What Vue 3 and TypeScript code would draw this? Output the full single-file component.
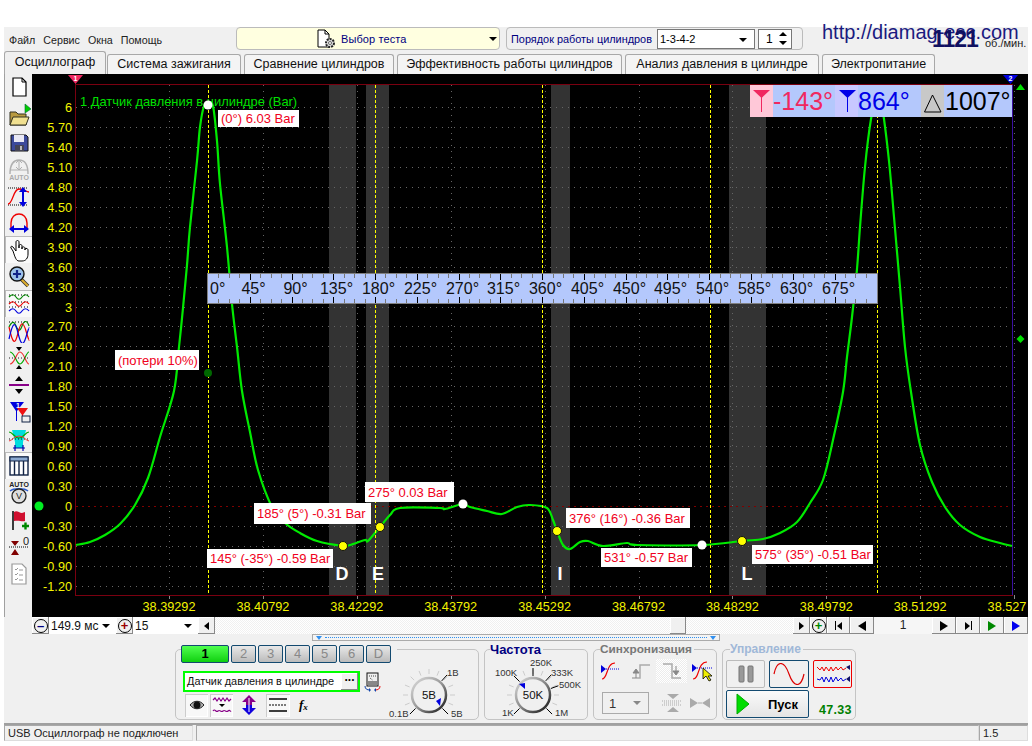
<script setup lang="ts">
const tabs = [
  { t: 'Осциллограф', w: 102 },
  { t: 'Система зажигания', w: 134 },
  { t: 'Сравнение цилиндров', w: 150 },
  { t: 'Эффективность работы цилиндров', w: 225 },
  { t: 'Анализ давления в цилиндре', w: 194 },
  { t: 'Электропитание', w: 113 }
]
const yVals = ['6','5.70','5.40','5.10','4.80','4.50','4.20','3.90','3.60','3.30','3','2.70','2.40','2.10','1.80','1.50','1.20','0.90','0.60','0.30','0','-0.30','-0.60','-0.90','-1.20']
const yTicks = yVals.map((l) => ({ l, y: Math.round(506 - 66.5 * parseFloat(l)) + 0.5 }))
const xVals = ['38.39292','38.40792','38.42292','38.43792','38.45292','38.46792','38.48292','38.49792','38.51292','38.527']
const xTicks = xVals.map((l, i) => ({ l, x: Math.round(169 + 93.9 * i) + 0.5, lx: i === 9 ? 1007 : 169 + 93.9 * i }))
const bands = [[329, 27], [366, 23], [551, 19], [729, 37]]
const cursors = [208.5, 375.5, 542.5, 710.5, 877.5]
const letters = [['D', 342], ['E', 378], ['I', 560], ['L', 747]] as [string, number][]
const deg = Array.from({ length: 16 }, (_, i) => ({ l: i * 45 + '°', x: Math.round(208 + i * 41.77) + 0.5 }))
const minor = Array.from({ length: 64 }, (_, i) => Math.round(208 + i * 10.44) + 0.5).filter((_, i) => i % 4 !== 0)
const labels = [
  { t: '(0°) 6.03 Bar', x: 218, y: 110, w: 81, h: 17 },
  { t: '(потери 10%)', x: 115, y: 350, w: 84, h: 20 },
  { t: '145° (-35°) -0.59 Bar', x: 207, y: 549, w: 126, h: 19 },
  { t: '185° (5°) -0.31 Bar', x: 254, y: 503, w: 117, h: 21 },
  { t: '275° 0.03 Bar', x: 365, y: 482, w: 89, h: 20 },
  { t: '376° (16°) -0.36 Bar', x: 566, y: 508, w: 124, h: 20 },
  { t: '531° -0.57 Bar', x: 601, y: 548, w: 91, h: 19 },
  { t: '575° (35°) -0.51 Bar', x: 752, y: 545, w: 121, h: 19 }
]
const pts: [number, number][] = [
  [76,545],[90,542],[105,535],[120,524],[135,505],[148,478],[160,437],[174,391],[179,347],[183,308],[187,265],[190,227],[197,161],[200,127],[204,106],[208,103],[213,106],[217,141],[220,184],[227,247],[232,304],[237,347],[242,391],[250,432],[258,470],[272,507],[285,523],[300,533],[317,541],[343,546],[350,545],[365,540],[368,541],[380,527],[390,515],[400,508],[440,508],[445,509],[463,504],[470,507],[487,511],[502,514],[517,507],[530,505],[547,508],[553,520],[557,531],[563,545],[570,549],[580,542],[588,541],[603,546],[627,543],[637,545],[702,545],[742,541],[763,539],[780,533],[797,522],[810,503],[823,480],[833,440],[843,392],[847,357],[852,317],[857,269],[860,227],[865,167],[871,119],[875,104],[878,96],[881,104],[884,119],[889,161],[894,217],[900,287],[905,347],[911,392],[920,445],[932,482],[945,507],[960,525],[980,537],[1000,543],[1012,546]
]
function smooth(p: [number, number][]): string {
  let d = `M${p[0][0]} ${p[0][1]}`
  for (let i = 0; i < p.length - 1; i++) {
    const a = p[Math.max(0, i - 1)], b = p[i], c = p[i + 1], e = p[Math.min(p.length - 1, i + 2)]
    const k = 1 / 6
    d += `C${(b[0] + (c[0] - a[0]) * k).toFixed(1)} ${(b[1] + (c[1] - a[1]) * k).toFixed(1)} ${(c[0] - (e[0] - b[0]) * k).toFixed(1)} ${(c[1] - (e[1] - b[1]) * k).toFixed(1)} ${c[0]} ${c[1]}`
  }
  return d
}
const curve = smooth(pts)
const channels = ['2', '3', '4', '5', '6', 'D']
function spokes(cx: number, cy: number, r1: number, r2: number, angles: number[]) {
  return angles.map((deg) => {
    const a = (deg * Math.PI) / 180
    return { x1: cx + r1 * Math.cos(a), y1: cy + r1 * Math.sin(a), x2: cx + r2 * Math.cos(a), y2: cy + r2 * Math.sin(a) }
  })
}
const ring = Array.from({ length: 13 }, (_, i) => 135 + (270 * i) / 12)
const voltSpokes = spokes(429, 695, 21, 26, ring)
const freqSpokes = spokes(533, 695, 21, 26, ring)
const voltMain = spokes(429, 695, 19, 27, [135, 312, 45])
const freqMain = spokes(533, 695, 19, 27, [135, 225, 270, 312, 340, 45])
</script>

<template>
  <div class="page">
    <div class="win">
      <div class="top">
        <nav class="menu"><span>Файл</span><span>Сервис</span><span>Окна</span><span>Помощь</span></nav>
        <div class="test">
          <svg class="testicon" width="22" height="20" viewBox="0 0 22 20">
            <path d="M2 1h7l4 4v13H2z" fill="#fff" stroke="#000" />
            <path d="M9 1v4h4" fill="none" stroke="#000" />
            <circle cx="14" cy="14" r="4" fill="#ddd" stroke="#222" stroke-width="2" stroke-dasharray="2 1" />
            <circle cx="14" cy="14" r="1.5" fill="#fff" stroke="#333" stroke-width=".7" />
          </svg>
          <span class="testtext">Выбор теста</span>
          <i class="caret testcaret"></i>
        </div>
        <div class="order">
          <span class="ordertext">Порядок работы цилиндров</span>
          <div class="sel selorder">1-3-4-2<i class="caret"></i></div>
          <div class="sel spin">1<span class="spinarrows"><i class="up"></i><i class="down"></i></span></div>
        </div>
      </div>
      <div class="url">http://diamag-esc.com</div>
      <div class="rpm">1121</div>
      <div class="rpmunit">об./мин.</div>

      <div class="tabs">
        <div v-for="(t, i) in tabs" :key="t.t" class="tab" :class="{ active: i === 0 }" :style="{ width: t.w + 'px' }">{{ t.t }}</div>
      </div>

      <div class="main">
        <div class="tools">
          <div class="tool"><svg width="24" height="24" viewBox="0 0 24 24"><path d="M6 5h9l4 4v14H6z" transform="translate(0 -3)" fill="#fff" stroke="#000" stroke-width="1.2"/><path d="M15 2v4h4" fill="none" stroke="#000"/></svg></div>
          <div class="tool"><svg width="24" height="24" viewBox="0 0 24 24"><path d="M20 1v9l6-4z" transform="translate(-2 0)" fill="#0c0" stroke="#063" stroke-width=".6"/><path d="M3 9h6l2 2h8v11H3z" fill="#b89a40" stroke="#332" /><path d="M3 22l3-8h16l-3 8z" fill="#f0e090" stroke="#332"/></svg></div>
          <div class="tool"><svg width="24" height="24" viewBox="0 0 24 24"><path d="M4 5h15l2 2v14H4z" fill="#3c4a9c" stroke="#111"/><rect x="7" y="5" width="10" height="7" fill="#e8e8f4"/><rect x="8" y="15" width="9" height="6" fill="#445" /><rect x="13" y="16" width="2" height="4" fill="#bbb"/></svg></div>
          <div class="tool"><svg width="26" height="24" viewBox="0 0 26 24"><path d="M4 17C4 7 8 3 13 3s9 4 9 14" fill="none" stroke="#b0b0b0" stroke-width="1.4"/><path d="M13 3v10M10 6l3-3 3 3M10 10l3 3 3-3M4 13h18" fill="none" stroke="#b0b0b0"/><text x="13" y="23" text-anchor="middle" class="auto gray">AUTO</text></svg></div>
          <div class="tool"><svg width="26" height="24" viewBox="0 0 26 24"><path d="M2 4h20M2 21h20" stroke="#000" stroke-dasharray="1 1"/><path d="M2 20c5 0 5-15 11-15 5 0 7 3 10 3" fill="none" stroke="#e00" stroke-width="1.3"/><path d="M17 7v12" stroke="#00d" stroke-width="2"/><path d="M13 8l4-5 4 5zM13 18l4 5 4-5z" fill="#00d"/></svg></div>
          <div class="tool"><svg width="26" height="24" viewBox="0 0 26 24"><path d="M5 18V12C5 6 9 3 13 3s8 3 8 9v6" fill="none" stroke="#e00" stroke-width="1.4"/><path d="M4 18h18" stroke="#00d" stroke-width="2"/><path d="M8 14l-5 4 5 4zM18 14l5 4-5 4z" fill="#00d"/></svg></div>
          <div class="tool pressed"><svg width="24" height="24" viewBox="0 0 24 24"><path d="M6 13l-2-3c-1-2 1-2 2-1l3 4V4c0-2 3-2 3 0v6-2c0-2 3-2 3 0v3-1c0-2 3-1 3 0v2-1c0-1 3-1 3 1v4c0 4-2 7-6 7h-3c-3 0-4-4-6-10z" fill="#fff" stroke="#000"/></svg></div>
          <div class="tool"><svg width="24" height="24" viewBox="0 0 24 24"><path d="M14 14l7 7" stroke="#333" stroke-width="3.5"/><path d="M14 14l7 7" stroke="#e0b030" stroke-width="2"/><circle cx="10" cy="9" r="7" fill="#9cc0e8" stroke="#111" stroke-width="1.4"/><path d="M6 9h8M10 5v8" stroke="#128" stroke-width="2.2"/></svg></div>
          <div class="tool pressed"><svg width="24" height="24" viewBox="0 0 24 24"><path d="M2 3h20M2 15h20M2 10h20" stroke="#000" stroke-dasharray="1 2"/><path d="M2 5c3-3 5-3 7 0s4 3 6 0 5-3 7 0" fill="none" stroke="#080" stroke-width="1.2"/><path d="M2 12c3-3 5-3 7 0s4 3 6 0 5-3 7 0" fill="none" stroke="#e00" stroke-width="1.2"/><path d="M2 19c3-3 5-3 7 0s4 3 6 0 5-3 7 0" fill="none" stroke="#00d" stroke-width="1.2"/></svg></div>
          <div class="tool"><svg width="24" height="24" viewBox="0 0 24 24"><path d="M2 3h20" stroke="#000" stroke-dasharray="1 2"/><path d="M2 8c3-6 5-6 7-1s4 6 6 0 5-6 7 0" fill="none" stroke="#080" stroke-width="1.2"/><path d="M2 8c4 18 6 18 9 6s5-12 8-2 3 9 3 9" fill="none" stroke="#e00" stroke-width="1.2"/><path d="M2 20c4-18 6-18 9-6s5 14 8 4 3-9 3-9" fill="none" stroke="#00d" stroke-width="1.2"/></svg></div>
          <div class="tool"><svg width="24" height="24" viewBox="0 0 24 24"><path d="M3 6c5 0 6 12 10 12s6-12 9-12" fill="none" stroke="#0a0" stroke-width="1.2"/><path d="M3 18c5 0 6-12 10-12s6 12 9 12" fill="none" stroke="#e33" stroke-width="1.2"/><path d="M2 12h20" stroke="#222" stroke-dasharray="1 2"/><path d="M9 1h6l-3 4zM9 23h6l-3-4z" fill="#000"/></svg></div>
          <div class="tool"><svg width="24" height="24" viewBox="0 0 24 24"><path d="M2 12h20" stroke="#808" stroke-width="2"/><path d="M8 8h8l-4-5zM8 16h8l-4 5z" fill="#000"/></svg></div>
          <div class="tool"><svg width="24" height="24" viewBox="0 0 24 24"><path d="M3 2h14l-7 9v10H9V11z" fill="#00d"/><path d="M10 8h11l-5 7v7h-1v-7z" fill="#e11"/><text x="9" y="8" class="tiny">1</text><rect x="15" y="16" width="8" height="6" fill="#eee" stroke="#124" /></svg></div>
          <div class="tool"><svg width="24" height="24" viewBox="0 0 24 24"><path d="M5 3h14l-3 12v6H8v-6z" fill="#0dd"/><path d="M2 5c4 0 5 6 10 6s6-6 10-6" fill="none" stroke="#0a0" stroke-width="1.2"/><path d="M2 12h20" stroke="#111" stroke-dasharray="1 2"/><path d="M2 14c4-1 5-5 10-5s6 4 10 5" fill="none" stroke="#e33"/><path d="M6 21h12M8 18v6M16 18v6" stroke="#00a" stroke-width="1.2"/></svg></div>
          <div class="tool pressed"><svg width="24" height="24" viewBox="0 0 24 24"><rect x="3" y="3" width="18" height="18" fill="#fff" stroke="#124" stroke-width="1.4"/><rect x="3" y="3" width="18" height="4" fill="#8aa8d0" stroke="#124"/><path d="M7.500 7v14M12 7v14M16.500 7v14" stroke="#124" stroke-width="1.4"/></svg></div>
          <div class="tool"><svg width="24" height="24" viewBox="0 0 24 24"><text x="12" y="6" text-anchor="middle" class="auto dark">AUTO</text><path d="M3 10c3-3 15-3 18 0" fill="none" stroke="#3060d0" stroke-width="1.5"/><circle cx="12" cy="15" r="7" fill="#ddd" stroke="#222" stroke-width="1.3"/><text x="12" y="18" text-anchor="middle" class="tinyv">V</text></svg></div>
          <div class="tool"><svg width="24" height="24" viewBox="0 0 24 24"><path d="M6 3v19" stroke="#000" stroke-width="1.5"/><path d="M7 4c3-2 5 1 8 1l3-1v9c-3 1-6-1-11 0z" fill="#d01030"/><path d="M15 18h7M18.500 14.500v7" stroke="#080" stroke-width="2.4"/></svg></div>
          <div class="tool"><svg width="24" height="24" viewBox="0 0 24 24"><text x="19" y="10" text-anchor="middle" class="zero">0</text><path d="M2 12h20" stroke="#000" stroke-dasharray="1 1"/><path d="M4 6h8l-4 5zM4 20h8l-4-6z" fill="#800000"/></svg></div>
          <div class="tool"><svg width="24" height="24" viewBox="0 0 24 24"><path d="M5 2h10l4 4v16H5z" fill="#fff" stroke="#999" stroke-width="1.2"/><path d="M8 7l1 1 2-2M8 12l1 1 2-2M8 17l1 1 2-2M12 8h4M12 13h4M12 18h4" fill="none" stroke="#999"/></svg></div>
        </div>

        <svg class="chart" width="996" height="543" viewBox="32 74 996 543">
          <rect x="32" y="74" width="996" height="543" fill="#000" />
          <rect v-for="b in bands" :key="b[0]" :x="b[0]" y="85" :width="b[1]" height="510" fill="#333" />
          <line v-for="t in yTicks" :key="t.l" x1="76" x2="1012" :y1="t.y" :y2="t.y" :class="t.l === '0' ? 'zero-line' : 'grid'" />
          <line v-for="t in xTicks" :key="t.l" :x1="t.x" :x2="t.x" y1="85" y2="595" class="grid" />
          <line v-for="t in xTicks" :key="'k' + t.l" :x1="t.x" :x2="t.x" y1="595" y2="599" stroke="#888" />
          <rect x="75.500" y="84.500" width="937" height="511" fill="none" stroke="#7a0010" />
          <line x1="1012.500" x2="1012.500" y1="85" y2="595" stroke="#3a10a0" />
          <path :d="curve" fill="none" stroke="#00ea00" stroke-width="2.200" />
          <line v-for="c in cursors" :key="c" :x1="c" :x2="c" y1="85" y2="595" class="cursor" />

          <text v-for="t in yTicks" :key="'y' + t.l" x="72" :y="t.y + 4.500" text-anchor="end" class="axis">{{ t.l }}</text>
          <text v-for="t in xTicks" :key="'x' + t.l" :x="t.lx" y="611" text-anchor="middle" class="axis">{{ t.l }}</text>

          <text x="80" y="106" class="trace">1 Датчик давления в цилиндре (Bar)</text>
          <text v-for="l in letters" :key="l[0]" :x="l[1]" y="580" text-anchor="middle" class="letter">{{ l[0] }}</text>

          <rect x="207.500" y="273.500" width="670" height="30" fill="#b4c8fc" stroke="#808080" />
          <g v-for="x in minor" :key="x">
            <line :x1="x" :x2="x" y1="274" y2="278" stroke="#777" />
            <line :x1="x" :x2="x" y1="299" y2="303" stroke="#777" />
          </g>
          <g v-for="(d, i) in deg" :key="d.l">
            <template v-if="i > 0">
              <line :x1="d.x" :x2="d.x" y1="274" y2="280" stroke="#000" />
              <line :x1="d.x" :x2="d.x" y1="297" y2="303" stroke="#000" />
            </template>
            <text :x="i === 0 ? 210 : d.x + 3" y="294" :text-anchor="i === 0 ? 'start' : 'middle'" class="deg">{{ d.l }}</text>
          </g>

          <g v-for="l in labels" :key="l.t">
            <rect :x="l.x" :y="l.y" :width="l.w" :height="l.h" fill="#fff" />
            <text :x="l.x + 3" :y="l.y + l.h / 2 + 4.500" class="lbl">{{ l.t }}</text>
          </g>

          <circle cx="208" cy="105" r="4.500" fill="#fff" />
          <circle cx="463" cy="504" r="4.500" fill="#fff" />
          <circle cx="702" cy="545" r="4.500" fill="#fff" />
          <circle cx="208" cy="373" r="4" fill="#006800" />
          <circle v-for="p in [[343, 546], [380, 527], [557, 531], [742, 541]]" :key="p[0]" :cx="p[0]" :cy="p[1]" r="4.500" fill="#ff0" stroke="#111" />

          <circle cx="39" cy="506" r="4.500" fill="#0e2" />
          <path d="M68 75h15l-7.500 9z" fill="#f02860" />
          <text x="75.500" y="81" text-anchor="middle" class="mark">1</text>
          <path d="M1003 75h15l-7.500 9z" fill="#0000e0" />
          <text x="1010.500" y="81" text-anchor="middle" class="mark">2</text>
          <path d="M1016 90h9l-4.500-6z" fill="#00e000" />
          <path d="M1020.500 335l4 4-4 4-4-4z" fill="#00e000" />

          <rect x="750" y="85" width="262" height="32" fill="#b4c8fc" />
          <rect x="750" y="85" width="23" height="32" fill="#ffc8d8" />
          <rect x="835" y="85" width="23" height="32" fill="#c8c8ff" />
          <rect x="921" y="85" width="23" height="32" fill="#c8c8c8" />
          <path d="M753 90h17l-8.500 8z" fill="#f02860" />
          <line x1="761.500" x2="761.500" y1="96" y2="112" stroke="#f02860" />
          <path d="M839 90h17l-8.500 8z" fill="#0000e8" />
          <line x1="847.500" x2="847.500" y1="96" y2="112" stroke="#0000e8" />
          <path d="M924.500 112l8-17 8.500 17z" fill="none" stroke="#000" />
          <text x="773" y="110" class="info" fill="#f02860">-143°</text>
          <text x="858" y="110" class="info" fill="#0000e8">864°</text>
          <text x="945" y="110" class="info" fill="#000">1007°</text>
        </svg>
      </div>

      <div class="bar">
        <button class="btn round"><span class="circ">–</span></button>
        <div class="barsel w68">149.9 мс<i class="caret"></i></div>
        <button class="btn round"><span class="circ plusred">+</span></button>
        <div class="barsel w64">15<i class="caret"></i></div>
        <button class="btn w17"><i class="tri left"></i></button>
        <div class="track"><div class="thumb"></div></div>
        <button class="btn w17"><i class="tri right"></i></button>
        <button class="btn round"><span class="circ plusgreen">+</span></button>
        <button class="btn w23"><i class="stop l"></i><i class="tri left"></i></button>
        <button class="btn w24"><i class="tri left big"></i></button>
        <div class="page-no">1</div>
        <button class="btn w24"><i class="tri right big"></i></button>
        <button class="btn w24"><i class="tri right"></i><i class="stop"></i></button>
        <button class="btn w24"><i class="tri right big green"></i></button>
        <button class="btn w24"><i class="tri right big blue"></i></button>
      </div>
      <div class="slider"><div class="sliderbox"><i class="mini"></i><span class="dots"></span><i class="mini"></i></div></div>

      <div class="panel">
        <section class="group g1">
          <div class="chantabs">
            <div class="chan on">1</div>
            <div v-for="c in channels" :key="c" class="chan">{{ c }}</div>
          </div>
          <div class="g1left">
            <div class="inputrow">
              <div class="input">Датчик давления в цилиндре<button class="btn dots3">...</button></div>
              <svg width="20" height="20" viewBox="0 0 20 20"><rect x="4" y="1" width="11" height="13" fill="#eee" stroke="#111"/><rect x="5" y="9" width="9" height="4" fill="#888"/><path d="M7 6l2.500 2M6 4h7" stroke="#444" stroke-dasharray="1 1"/><path d="M2 14c0 3 2 4 5 4" fill="none" stroke="#14a"/><path d="M17 14c0 3-2 4-5 4" fill="none" stroke="#e11"/><path d="M6 16l2 2-2 2zM13 16l-2 2 2 2z" fill="#14a"/></svg>
            </div>
            <div class="iconrow">
              <button class="flat on w23b"><svg width="18" height="14" viewBox="0 0 18 14"><path d="M2 7c4-5 10-5 14 0-4 5-10 5-14 0z" fill="#aaa" stroke="#222"/><circle cx="9" cy="7" r="3.500" fill="#111"/></svg></button>
              <button class="flat on w23b"><svg width="20" height="20" viewBox="0 0 20 20"><path d="M1 5l2-2 2 3 2-3 2 3 2-3 2 3 2-3 2 3 2-2" fill="none" stroke="#808" stroke-width="1.200"/><path d="M7 9h6l-3 3z" fill="#000"/><path d="M1 16c2-3 3 2 5 0s3 2 5 0 3 2 5 0 2 1 3 0" fill="none" stroke="#808" stroke-width="1.200"/></svg></button>
              <span class="plain w20"><svg width="16" height="20" viewBox="0 0 16 20"><path d="M8 0l7 7h-4v3H5V7H1z" fill="#808"/><path d="M5 10h6v3h4l-7 7-7-7h4z" fill="#10d"/><path d="M8 3v14" stroke="#fff"/></svg></span>
              <button class="flat on w23c"><svg width="20" height="16" viewBox="0 0 20 16"><path d="M1 2h18M1 14h18" stroke="#000" stroke-width="1.300"/><path d="M1 8h18" stroke="#000" stroke-dasharray="2 1"/></svg></button>
              <span class="fx">f<sub>x</sub></span>
            </div>
          </div>
          <svg class="knob" width="92" height="64" viewBox="384 660 92 64">
            <line v-for="(s, i) in voltSpokes" :key="i" :x1="s.x1" :y1="s.y1" :x2="s.x2" :y2="s.y2" stroke="#ccc" />
            <line v-for="(s, i) in voltMain" :key="'m' + i" :x1="s.x1" :y1="s.y1" :x2="s.x2" :y2="s.y2" stroke="#000" />
            <circle cx="429" cy="695" r="17" fill="#f0f0f0" stroke="url(#ring)" stroke-width="2.500" />
            <path d="M436 701l5-3-1 8z" fill="#00d" />
            <text x="429" y="699" text-anchor="middle" class="kv">5В</text>
            <text x="447" y="676" class="kl">1В</text>
            <text x="389" y="717" class="kl">0.1В</text>
            <text x="451" y="717" class="kl">5В</text>
            <defs>
              <linearGradient id="ring" x1="0" y1="0" x2="1" y2="1"><stop offset="0" stop-color="#ddd"/><stop offset=".5" stop-color="#999"/><stop offset="1" stop-color="#111"/></linearGradient>
            </defs>
          </svg>
        </section>

        <section class="group g2">
          <span class="legend navy">Частота</span>
          <svg width="103" height="71" viewBox="484 649 103 71">
            <line v-for="(s, i) in freqSpokes" :key="i" :x1="s.x1" :y1="s.y1" :x2="s.x2" :y2="s.y2" stroke="#ccc" />
            <line v-for="(s, i) in freqMain" :key="'m' + i" :x1="s.x1" :y1="s.y1" :x2="s.x2" :y2="s.y2" stroke="#000" />
            <circle cx="533" cy="695" r="17" fill="#f0f0f0" stroke="url(#ring2)" stroke-width="2.500" />
            <path d="M519 684l6-1 0 6z" fill="#00d" />
            <text x="533" y="699" text-anchor="middle" class="kv">50K</text>
            <text x="495" y="676" class="kl">100K</text>
            <text x="530" y="666" class="kl">250K</text>
            <text x="551" y="676" class="kl">333K</text>
            <text x="559" y="688" class="kl">500K</text>
            <text x="502" y="716" class="kl">1K</text>
            <text x="555" y="716" class="kl">1M</text>
            <defs>
              <linearGradient id="ring2" x1="0" y1="0" x2="1" y2="1"><stop offset="0" stop-color="#ddd"/><stop offset=".5" stop-color="#888"/><stop offset="1" stop-color="#111"/></linearGradient>
            </defs>
          </svg>
        </section>

        <section class="group g3">
          <span class="legend grayt">Синхронизация</span>
          <div class="syncrow">
            <span class="syncicon"><svg width="22" height="22" viewBox="0 0 22 22"><path d="M3 19c6 0 4-16 13-16" fill="none" stroke="#e00" stroke-width="1.200"/><path d="M7 9h13" stroke="#00d" stroke-dasharray="1 1"/><path d="M2 5l5 4-5 4z" fill="#00d"/></svg></span>
            <span class="syncicon"><svg width="22" height="22" viewBox="0 0 22 22"><path d="M2 18h8V5h10" fill="none" stroke="#aaa" stroke-width="1.500"/><path d="M6 9l-3 4h6zM6 13v5" fill="#888" stroke="#888"/></svg></span>
            <span class="syncicon hatched"><svg width="22" height="22" viewBox="0 0 22 22"><path d="M2 4h9v14h9" fill="none" stroke="#aaa" stroke-width="1.500"/><path d="M15 6v5M12 11h6l-3 4z" fill="#888" stroke="#888"/></svg></span>
            <span class="syncicon"><svg width="24" height="24" viewBox="0 0 24 24"><path d="M2 20c7 0 4-17 14-17" fill="none" stroke="#e00" stroke-width="1.200"/><path d="M6 9h15" stroke="#00d" stroke-dasharray="1 1"/><path d="M1 5l5 4-5 4z" fill="#00d"/><path d="M12 9v11l3-3 3 5 2-1-3-4h4z" fill="#ee0" stroke="#000" stroke-width=".8"/></svg></span>
          </div>
          <div class="syncrow2">
            <div class="syncsel">1<i class="caret graycaret"></i></div>
            <svg class="s1" width="22" height="20" viewBox="0 0 22 20"><path d="M6 1h12l-6 5zM6 19h12l-6-5z" fill="#aaa"/><path d="M1 8h20M3 10h16M1 12h20" stroke="#aaa" stroke-dasharray="1 1"/></svg>
            <svg class="s2" width="22" height="14" viewBox="0 0 22 14"><path d="M1 2l8 5-8 5zM21 2l-8 5 8 5z" fill="#aaa"/><path d="M9 7h4" stroke="#aaa"/></svg>
          </div>
        </section>

        <section class="group g4">
          <span class="legend bluet">Управление</span>
          <div class="ctlrow">
            <button class="ctl grayb w39"><svg width="16" height="18" viewBox="0 0 16 18"><rect x="1" y="1" width="5" height="16" rx="1" fill="#999" stroke="#777"/><rect x="10" y="1" width="5" height="16" rx="1" fill="#999" stroke="#777"/></svg></button>
            <button class="ctl navyb w40"><svg width="32" height="22" viewBox="0 0 32 22"><path d="M1 11C4-3 11-3 16 11s12 14 15 0" fill="none" stroke="#d00" stroke-width="1.200"/></svg></button>
            <button class="ctl redb w39"><svg width="34" height="22" viewBox="0 0 34 22"><path d="M1 4l3 3 2-3 2 4 2-4 3 4 2-4 2 4 3-4 2 3 3-3 2 3 3-2" fill="none" stroke="#e00"/><path d="M1 16l3 1 2-3 2 5 2-5 3 5 2-5 2 5 3-5 2 4 3-3 2 3 3-2" fill="none" stroke="#00d"/><path d="M34 2l-4 2 4 3zM34 13l-4 3 4 3z" fill="#116"/></svg></button>
          </div>
          <div class="ctlrow2">
            <button class="run"><svg width="14" height="22" viewBox="0 0 14 22"><path d="M1 1l12 10L1 21z" fill="#0d0" stroke="#0a0"/></svg><span>Пуск</span></button>
            <span class="fps">47.33</span>
          </div>
        </section>
      </div>

      <footer class="status">
        <div class="cell c1">USB Осциллограф не подключен</div>
        <div class="cell c2"></div>
        <div class="cell c3">1.5</div>
      </footer>
    </div>
  </div>
</template>

<style>
html, body { margin: 0; background: #fff; }
</style>

<style scoped>
.page { width: 1032px; height: 746px; padding-top: 27px; padding-left: 4px; box-sizing: border-box; overflow: hidden; background: #fff; font-family: "Liberation Sans", Arial, sans-serif; }
.win { position: relative; width: 1024px; height: 714px; background: #f0f0f0; display: flex; flex-direction: column; }
.top { height: 25px; display: flex; align-items: flex-start; }
.menu { width: 232px; display: flex; gap: 8px; padding: 7px 0 0 5px; box-sizing: border-box; font-size: 10.700px; color: #222; }
.test { width: 264px; height: 23px; box-sizing: border-box; background: #ffffe0; border: 1px solid #bbb; border-radius: 4px; position: relative; display: flex; align-items: center; padding-left: 79px; color: #000080; font-size: 11px; }
.testicon { margin-right: 3px; }
.testtext { letter-spacing: .1px; }
.testcaret { position: absolute; right: 2px; top: 9px; }
.order { width: 297px; height: 23px; box-sizing: border-box; margin-left: 6px; border: 1px solid #bbb; border-radius: 4px; display: flex; align-items: center; padding-left: 4px; font-size: 10.900px; color: #000080; }
.ordertext { width: 146px; white-space: nowrap; }
.sel { height: 20px; box-sizing: border-box; background: #fff; border: 1px solid #777; color: #000; position: relative; display: flex; align-items: center; padding-left: 2px; font-size: 11px; }
.selorder { width: 98px; }
.selorder .caret { position: absolute; right: 7px; top: 8px; }
.spin { width: 34px; margin-left: 3px; padding-left: 7px; font-size: 12px; }
.spinarrows { position: absolute; right: 4px; top: 2px; display: flex; flex-direction: column; gap: 5px; }
.up { width: 0; height: 0; border: 4px solid transparent; border-top: 0; border-bottom: 4px solid #000; }
.down { width: 0; height: 0; border: 4px solid transparent; border-bottom: 0; border-top: 4px solid #000; }
.caret { display: inline-block; width: 0; height: 0; border: 4px solid transparent; border-bottom: 0; border-top: 4px solid #000; }
.url { position: absolute; left: 818px; top: -7px; font-size: 20px; line-height: 24px; color: #1a1a80; white-space: nowrap; }
.rpm { position: absolute; left: 928px; top: -1px; font-size: 23px; line-height: 26px; font-weight: 700; letter-spacing: -1px; color: #101060; }
.rpmunit { position: absolute; left: 981px; top: 9px; font-size: 11px; line-height: 14px; color: #222; }
.tabs { height: 22px; display: flex; align-items: flex-end; }
.tab { height: 20px; box-sizing: border-box; flex: none; margin-right: 3px; border: 1px solid #a8a8a8; border-bottom: 0; border-radius: 3px 3px 0 0; background: #f4f4f4; font-size: 12.500px; line-height: 19px; text-align: center; color: #111; white-space: nowrap; }
.tab.active { height: 23px; line-height: 20px; margin-right: 1px; background: #f0f0f0; }
.main { height: 543px; display: flex; }
.tools { width: 28px; flex: none; box-sizing: border-box; border-left: 1px solid #a0a0a0; display: flex; flex-direction: column; }
.tool { height: 27px; flex: none; display: flex; align-items: center; justify-content: center; }
.tool.pressed { background: #f9f9f9; box-shadow: inset 1px 1px #bbb; }
.chart { display: block; flex: none; }
.grid { stroke: #666; stroke-dasharray: 1 5; }
.zero-line { stroke: #800000; stroke-dasharray: 2 4; }
.cursor { stroke: #ff0; stroke-dasharray: 3 2; }
.axis { fill: #f4f400; font-size: 12.700px; font-family: "Liberation Sans", Arial, sans-serif; }
.trace { fill: #00e000; font-size: 12.900px; font-family: "Liberation Sans", Arial, sans-serif; }
.letter { fill: #fff; font-size: 18px; font-weight: 700; font-family: "Liberation Sans", Arial, sans-serif; }
.deg { fill: #111; font-size: 16px; font-family: "Liberation Sans", Arial, sans-serif; }
.lbl { fill: #f00020; font-size: 13px; font-family: "Liberation Sans", Arial, sans-serif; }
.info { font-size: 25px; font-family: "Liberation Sans", Arial, sans-serif; }
.mark { fill: #fff; font-size: 7px; font-weight: 700; font-family: "Liberation Sans", Arial, sans-serif; }
.auto { font-size: 7px; font-weight: 700; font-family: "Liberation Sans", Arial, sans-serif; }
.auto.gray { fill: #aaa; }
.auto.dark { fill: #222; }
.tiny { fill: #fff; font-size: 7px; font-weight: 700; font-family: "Liberation Sans", Arial, sans-serif; }
.tinyv { fill: #222; font-size: 9px; font-family: "Liberation Sans", Arial, sans-serif; }
.zero { fill: #222; font-size: 11px; font-family: "Liberation Sans", Arial, sans-serif; }
.bar { height: 17px; margin-left: 28px; display: flex; align-items: stretch; font-size: 12px; }
.btn { padding: 0; margin: 0; border: 0; background: #f0f0f0; box-shadow: inset -1px -1px #888, inset 1px 1px #fff; display: flex; align-items: center; justify-content: center; flex: none; color: #000; font-family: inherit; }
.round { width: 17px; }
.circ { width: 12px; height: 12px; border: 1px solid #000; border-radius: 50%; display: flex; align-items: center; justify-content: center; line-height: 10px; font-size: 13px; font-weight: 700; color: #000080; }
.plusred { color: #900; }
.plusgreen { color: #080; }
.barsel { background: #fff; display: flex; align-items: center; justify-content: space-between; box-sizing: border-box; padding: 0 6px 0 2px; flex: none; color: #111; }
.w68 { width: 67px; }
.w64 { width: 65px; }
.w17 { width: 17px; }
.w23 { width: 23px; }
.w24 { width: 24px; }
.tri { width: 0; height: 0; border: 4px solid transparent; display: block; }
.tri.left { border-left: 0; border-right: 5px solid #000; }
.tri.right { border-right: 0; border-left: 5px solid #000; }
.tri.big { border-width: 5px; }
.tri.left.big { border-left: 0; border-right-width: 8px; }
.tri.right.big { border-right: 0; border-left-width: 8px; }
.tri.right.green { border-left-color: #080; }
.tri.right.blue { border-left-color: #00e; }
.stop { width: 1px; height: 9px; background: #000; margin-left: 1px; }
.stop.l { margin: 0 1px 0 0; }
.track { flex: 1; position: relative; background: repeating-conic-gradient(#fff 0 25%, #f0f0f0 0 50%) 0 0 / 2px 2px; }
.thumb { position: absolute; left: 455px; top: 0; width: 16px; height: 17px; background: #f0f0f0; box-shadow: inset -1px -1px #888, inset 1px 1px #fff; }
.page-no { width: 58px; flex: none; text-align: center; background: #f6f6f6; line-height: 17px; color: #222; }
.slider { height: 7px; padding-left: 308px; }
.sliderbox { width: 408px; height: 7px; box-sizing: border-box; border: 1px solid #aaa; display: flex; align-items: center; padding: 0 3px; gap: 3px; background: #f4f4f4; }
.mini { width: 0; height: 0; border: 3.500px solid transparent; border-bottom: 0; border-top: 4px solid #3090f0; flex: none; }
.dots { flex: 1; border-top: 1px dotted #3090f0; }
.panel { height: 84px; padding: 8px 0 0 171px; box-sizing: border-box; display: flex; gap: 5px; border-bottom: 2px solid #a0a0a0; }
.group { position: relative; height: 71px; box-sizing: border-box; border: 1px solid #c4c4c4; border-radius: 5px; flex: none; }
.g1 { width: 304px; display: flex; padding: 21px 0 0 7px; }
.g2 { width: 104px; }
.g2 svg { position: absolute; left: -1px; top: -1px; overflow: visible; }
.g3 { width: 124px; padding: 8px 0 0 0; }
.g4 { width: 134px; padding: 10px 0 0 3px; }
.chantabs { position: absolute; left: 5px; top: -5px; display: flex; gap: 2px; background: #f0f0f0; padding-right: 6px; }
.chan { width: 25px; height: 18px; box-sizing: border-box; border: 1px solid #134a70; border-radius: 2px; background: linear-gradient(#e8e8e8, #bbb); color: #888; font-size: 13px; line-height: 16px; text-align: center; }
.chan.on { width: 48px; background: linear-gradient(#50ff50, #10d010); color: #000; font-weight: 700; }
.g1left { width: 200px; flex: none; }
.inputrow { display: flex; align-items: center; gap: 3px; height: 21px; }
.input { width: 177px; height: 21px; box-sizing: border-box; background: #fff; border: 2px solid #00ff00; font-size: 10.900px; line-height: 17px; padding-left: 2px; position: relative; color: #111; white-space: nowrap; }
.dots3 { position: absolute; right: 0; top: 0; width: 17px; height: 17px; font-size: 12px; font-weight: 700; line-height: 8px; align-items: flex-start; }
.iconrow { display: flex; align-items: center; margin-top: 1px; padding-left: 2px; gap: 2px; height: 24px; }
.flat { padding: 0; border: 0; background: #f8f8f8; box-shadow: inset 1px 1px #ccc, inset -1px -1px #fff; display: flex; align-items: center; justify-content: center; height: 23px; }
.w23b { width: 23px; }
.w23c { width: 24px; margin-left: 3px; }
.plain { display: flex; justify-content: center; }
.w20 { width: 25px; margin-left: 1px; }
.fx { font-family: "Liberation Serif", serif; font-style: italic; font-weight: 700; font-size: 13px; margin-left: 7px; color: #000; }
.fx sub { font-size: 9px; vertical-align: -1px; }
.knob { display: block; margin-top: -11px; margin-left: 1px; flex: none; overflow: visible; }
.kv { font-size: 11.500px; fill: #111; font-family: "Liberation Sans", Arial, sans-serif; }
.kl { font-size: 9.500px; fill: #333; font-family: "Liberation Sans", Arial, sans-serif; }
.legend { position: absolute; left: 5px; top: -8px; padding-right: 2px; font-size: 13px; font-weight: 700; line-height: 15px; background: #f0f0f0; white-space: nowrap; }
.navy { color: #000080; }
.grayt { color: #777; font-size: 11.800px; left: 6px; }
.bluet { color: #a0b8d8; font-size: 12px; left: 7px; }
.syncrow { display: flex; height: 24px; margin-top: 1px; }
.syncicon { width: 31px; flex: none; display: flex; align-items: center; justify-content: center; }
.hatched { background: repeating-conic-gradient(#fff 0 25%, #ececec 0 50%) 0 0 / 2px 2px; }
.syncrow2 { display: flex; align-items: center; margin-top: 9px; padding-left: 8px; }
.syncsel { width: 47px; height: 22px; box-sizing: border-box; border: 1px solid #aaa; display: flex; align-items: center; justify-content: space-between; padding: 0 7px 0 6px; font-size: 13px; color: #333; }
.graycaret { border-top-color: #888; }
.s1 { margin-left: 12px; }
.s2 { margin-left: 6px; }
.ctlrow { display: flex; gap: 4px; }
.ctl { height: 28px; box-sizing: border-box; padding: 0; background: #f0f0f0; border-radius: 2px; display: flex; align-items: center; justify-content: center; }
.grayb { border: 1px solid #bbb; }
.navyb { border: 1px solid #134a70; }
.redb { border: 1px solid #e00; }
.w39 { width: 39px; }
.w40 { width: 40px; }
.ctlrow2 { display: flex; align-items: flex-end; margin-top: 2px; }
.run { width: 83px; height: 28px; box-sizing: border-box; padding: 0 0 0 9px; border: 1px solid #134a70; border-radius: 2px; background: linear-gradient(#fafafa, #e4e4e4); display: flex; align-items: center; font: 700 13px "Liberation Sans", Arial, sans-serif; color: #000; }
.run span { margin-left: 18px; }
.fps { margin-left: 10px; color: #008000; font-size: 12.500px; font-weight: 700; letter-spacing: .3px; line-height: 15px; }
.status { height: 16px; display: flex; font-size: 11px; color: #222; }
.cell { box-sizing: border-box; border: 1px solid #ddd; border-top-color: #a8a8a8; border-left-color: #a8a8a8; line-height: 14px; padding-left: 3px; white-space: nowrap; overflow: hidden; }
.c1 { width: 189px; }
.c2 { flex: 1; margin-left: 3px; }
.c3 { width: 49px; }
</style>
